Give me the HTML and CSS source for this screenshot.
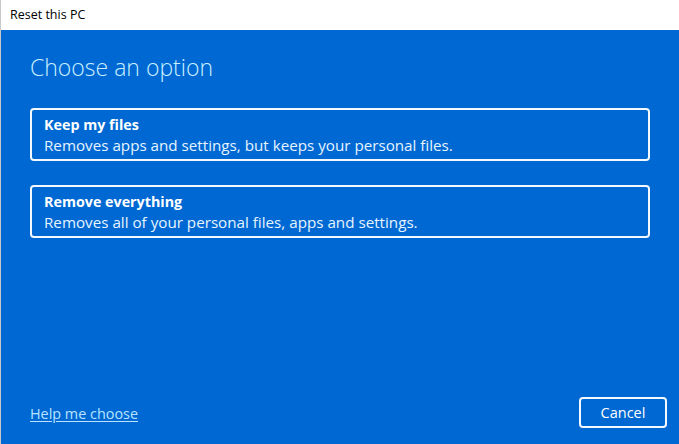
FILE: index.html
```html
<!DOCTYPE html>
<html lang="en">
<head>
<meta charset="utf-8">
<title>Reset this PC</title>
<link rel="stylesheet" href="styles.css">
</head>
<body>
<div class="window">
  <header class="titlebar">Reset this PC</header>
  <main class="content">
    <h1 class="heading">Choose an option</h1>
    <div class="options">
      <button class="option">
        <span class="option-title">Keep my files</span>
        <span class="option-desc">Removes apps and settings, but keeps your personal files.</span>
      </button>
      <button class="option">
        <span class="option-title">Remove everything</span>
        <span class="option-desc">Removes all of your personal files, apps and settings.</span>
      </button>
    </div>
    <footer class="footer">
      <a class="help" href="#">Help me choose</a>
      <button class="cancel">Cancel</button>
    </footer>
  </main>
</div>
</body>
</html>
```

FILE: styles.css
```css
html, body {
  margin: 0;
  padding: 0;
  width: 679px;
  height: 444px;
  overflow: hidden;
}
body {
  font-family: "Open Sans", "Noto Sans", sans-serif;
  background: #ffffff;
}
.window {
  width: 679px;
  height: 444px;
  display: flex;
  flex-direction: column;
  border-left: 1px solid #c8c8c8;
  box-sizing: border-box;
}
.titlebar {
  height: 30px;
  flex: none;
  background: #ffffff;
  color: #000;
  font-size: 12.5px;
  line-height: 30px;
  padding-left: 9px;
  box-sizing: border-box;
}
.content {
  flex: 1;
  background: #0068d2;
  display: flex;
  flex-direction: column;
  padding: 0 12px 16px 29px;
  box-sizing: border-box;
}
.heading {
  margin: 20px 0 0 0;
  font-weight: 300;
  font-size: 23px;
  line-height: 34px;
  color: #c9efff;
}
.options {
  margin-top: 24px;
  display: flex;
  flex-direction: column;
  gap: 24px;
}
.option {
  display: flex;
  flex-direction: column;
  align-items: flex-start;
  height: 53px;
  width: 620px;
  box-sizing: border-box;
  border: 2px solid #f4f9ff;
  border-radius: 4px;
  background: transparent;
  padding: 5px 12px 0 12px;
  font-family: inherit;
  color: #ffffff;
  text-align: left;
  cursor: pointer;
}
.option-title {
  font-weight: 700;
  font-size: 14.3px;
  line-height: 20px;
  color: #ffffff;
}
.option-desc {
  font-size: 15.2px;
  line-height: 20px;
  color: #e6f4ff;
}
.footer {
  margin-top: auto;
  display: flex;
  justify-content: space-between;
  align-items: center;
}
.help {
  color: #b8e4ff;
  font-size: 14.4px;
  text-decoration: underline;
  text-underline-offset: 2px;
  margin-top: 2px;
}
.cancel {
  width: 88px;
  height: 31px;
  box-sizing: border-box;
  border: 2px solid #f4f9ff;
  border-radius: 4px;
  background: transparent;
  color: #ffffff;
  font-family: inherit;
  font-size: 14.5px;
  cursor: pointer;
}
```
